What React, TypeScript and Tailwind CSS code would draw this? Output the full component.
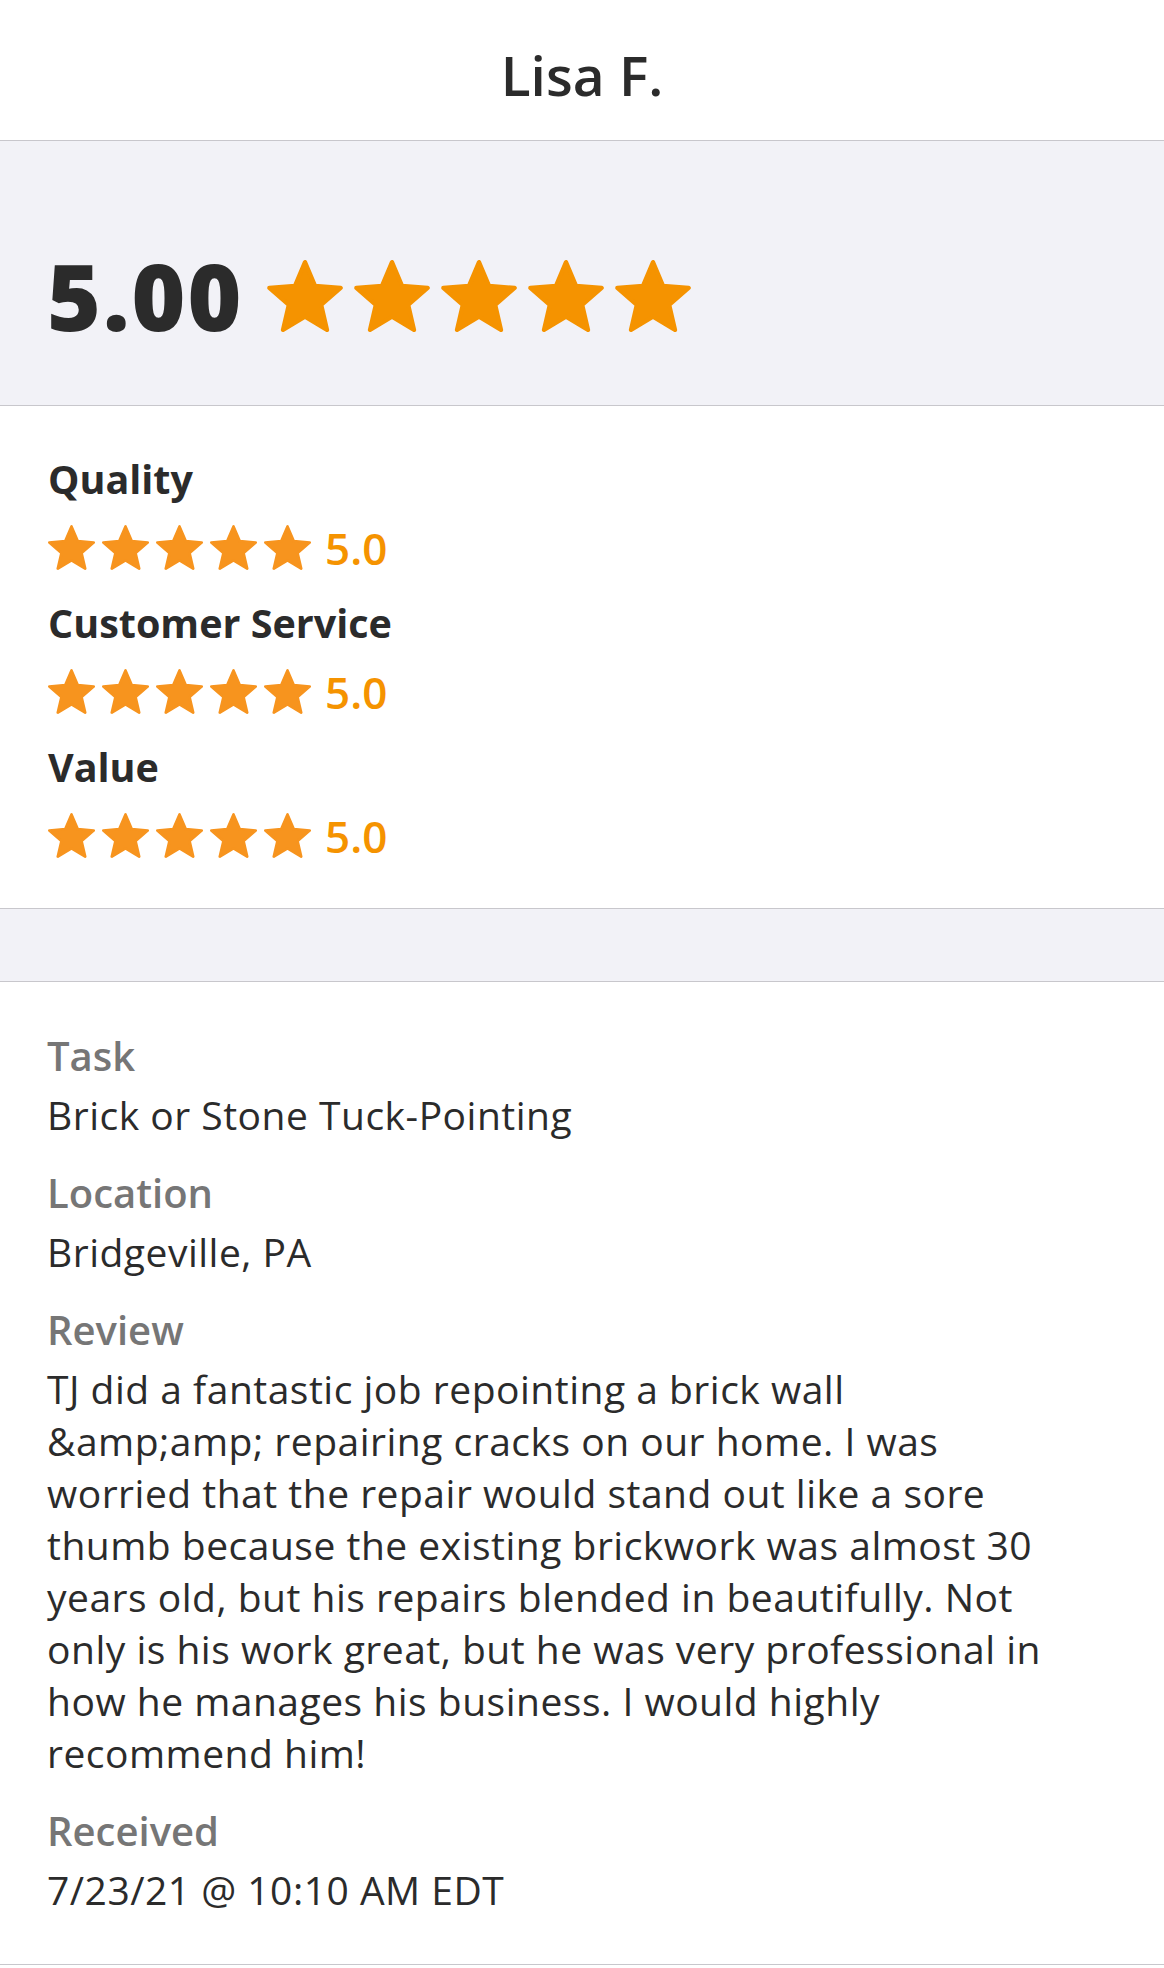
import React from "react";

const FONT = { fontFamily: '"Open Sans", "Noto Sans", Arial, sans-serif' };

function Star({ className, color }: { className: string; color: string }) {
  return (
    <svg viewBox="1.4 1.4 21.2 20.2" className={className} aria-hidden="true">
      <path
        d="M12 17.27L18.18 21l-1.64-7.03L22 9.24l-7.19-.61L12 2 9.19 8.63 2 9.24l5.46 4.73L5.82 21z"
        fill={color}
        stroke={color}
        strokeWidth={1.2}
        strokeLinejoin="round"
      />
    </svg>
  );
}

function SubRating({ label }: { label: string }) {
  return (
    <div className="flex flex-col">
      <div className="text-[39.5px] leading-[48px] font-bold text-[#2b2b2b]">{label}</div>
      <div className="mt-[22px] flex h-[45px] items-center">
        <div className="flex gap-[7px]">
          {[0, 1, 2, 3, 4].map((i) => (
            <Star key={i} className="h-[45px] w-[47px]" color="#f7941e" />
          ))}
        </div>
        <span className="ml-[14px] text-[44px] leading-none font-semibold text-[#f59300]">5.0</span>
      </div>
    </div>
  );
}

function Detail({ label, children }: { label: string; children: React.ReactNode }) {
  return (
    <div className="flex flex-col">
      <div className="text-[40px] leading-[52px] font-semibold text-[#767676]">{label}</div>
      <div className="mt-[7px] text-[39px] leading-[52px] tracking-[0.5px] text-[#2b2b2b]">{children}</div>
    </div>
  );
}

export default function App() {
  return (
    <div className="w-[1164px] min-h-[1968px] bg-white" style={FONT}>
      <header className="border-b border-[#c8c7cc] pt-[47px] pb-[37px] text-center">
        <h1 className="text-[55px] leading-[56px] font-semibold text-[#2b2b2b]">Lisa F.</h1>
      </header>

      <section className="border-b border-[#c8c7cc] bg-[#f2f2f7] pl-[47px] pt-[109px] pb-[63px]">
        <div className="flex items-center">
          <span className="text-[92px] leading-[92px] font-extrabold tracking-[2px] text-[#2b2b2b]">5.00</span>
          <div className="ml-[24px] flex gap-[11px]">
            {[0, 1, 2, 3, 4].map((i) => (
              <Star key={i} className="h-[72px] w-[76px]" color="#f59300" />
            ))}
          </div>
        </div>
      </section>

      <section className="flex flex-col gap-[29px] border-b border-[#c8c7cc] pl-[48px] pt-[49px] pb-[50px]">
        <SubRating label="Quality" />
        <SubRating label="Customer Service" />
        <SubRating label="Value" />
      </section>

      <div className="h-[73px] border-b border-[#c8c7cc] bg-[#f2f2f7]" />

      <section className="flex flex-col gap-[26px] border-b border-[#c8c7cc] pl-[47px] pr-[10px] pt-[48px] pb-[48px]">
        <Detail label="Task">Brick or Stone Tuck-Pointing</Detail>
        <Detail label="Location">Bridgeville, PA</Detail>
        <Detail label="Review">
          TJ did a fantastic job repointing a brick wall
          <br />
          &amp;amp;amp; repairing cracks on our home. I was
          <br />
          worried that the repair would stand out like a sore
          <br />
          thumb because the existing brickwork was almost 30
          <br />
          years old, but his repairs blended in beautifully. Not
          <br />
          only is his work great, but he was very professional in
          <br />
          how he manages his business. I would highly
          <br />
          recommend him!
        </Detail>
        <Detail label="Received">7/23/21 @ 10:10 AM EDT</Detail>
      </section>
    </div>
  );
}
